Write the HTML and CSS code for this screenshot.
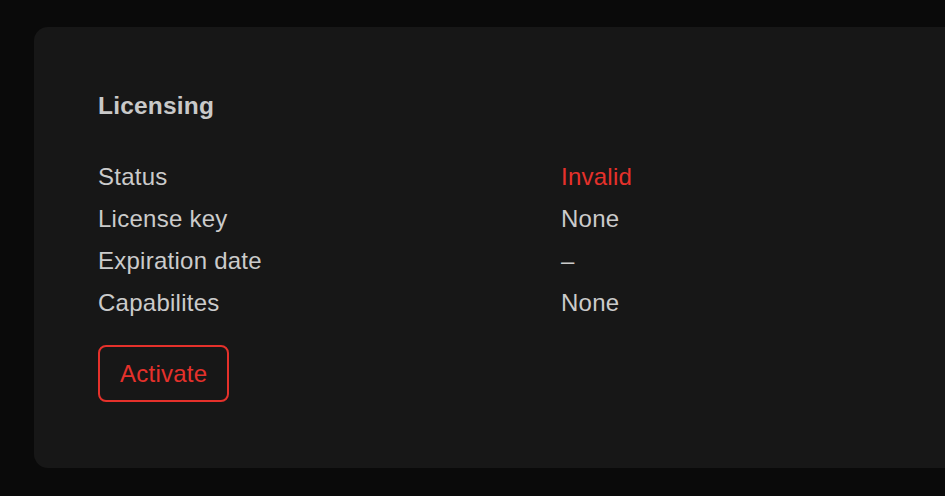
FILE: index.html
```html
<!DOCTYPE html>
<html lang="en">
<head>
<meta charset="utf-8">
<title>Licensing</title>
<link rel="stylesheet" href="styles.css">
</head>
<body>
  <section class="card">
    <h2 class="card-title">Licensing</h2>
    <dl class="info">
      <dt class="label">Status</dt>
      <dd class="value value-error">Invalid</dd>
      <dt class="label">License key</dt>
      <dd class="value">None</dd>
      <dt class="label">Expiration date</dt>
      <dd class="value">–</dd>
      <dt class="label">Capabilites</dt>
      <dd class="value">None</dd>
    </dl>
    <button class="btn-activate" type="button">Activate</button>
  </section>
</body>
</html>
```
FILE: styles.css
```css
html, body {
  margin: 0;
  height: 100%;
  overflow: hidden;
}
body {
  background: #0a0a0a;
  padding: 27px 0 0 34px;
  box-sizing: border-box;
  font-family: "Liberation Sans", Arial, Helvetica, sans-serif;
  color: #cbcbcb;
}
.card {
  width: 1000px;
  background: #171717;
  border-radius: 14px;
  padding: 65px 64px 66px 64px;
  box-sizing: border-box;
}
.card-title {
  margin: 0 0 36px 0;
  font-size: 24.5px;
  line-height: 28px;
  font-weight: 700;
  letter-spacing: 0.2px;
  color: #c9c9c9;
}
.info {
  display: grid;
  grid-template-columns: 463px 1fr;
  margin: 0;
  font-size: 24px;
  line-height: 42px;
  letter-spacing: 0.25px;
}
.label, .value {
  margin: 0;
}
.value-error {
  color: #e5312b;
}
.btn-activate {
  display: block;
  margin-top: 21px;
  background: transparent;
  border: 2px solid #e5312b;
  border-radius: 8px;
  color: #e5312b;
  font-family: inherit;
  font-size: 24px;
  line-height: 33px;
  letter-spacing: 0.25px;
  padding: 10px 20px;
  cursor: pointer;
}
```
